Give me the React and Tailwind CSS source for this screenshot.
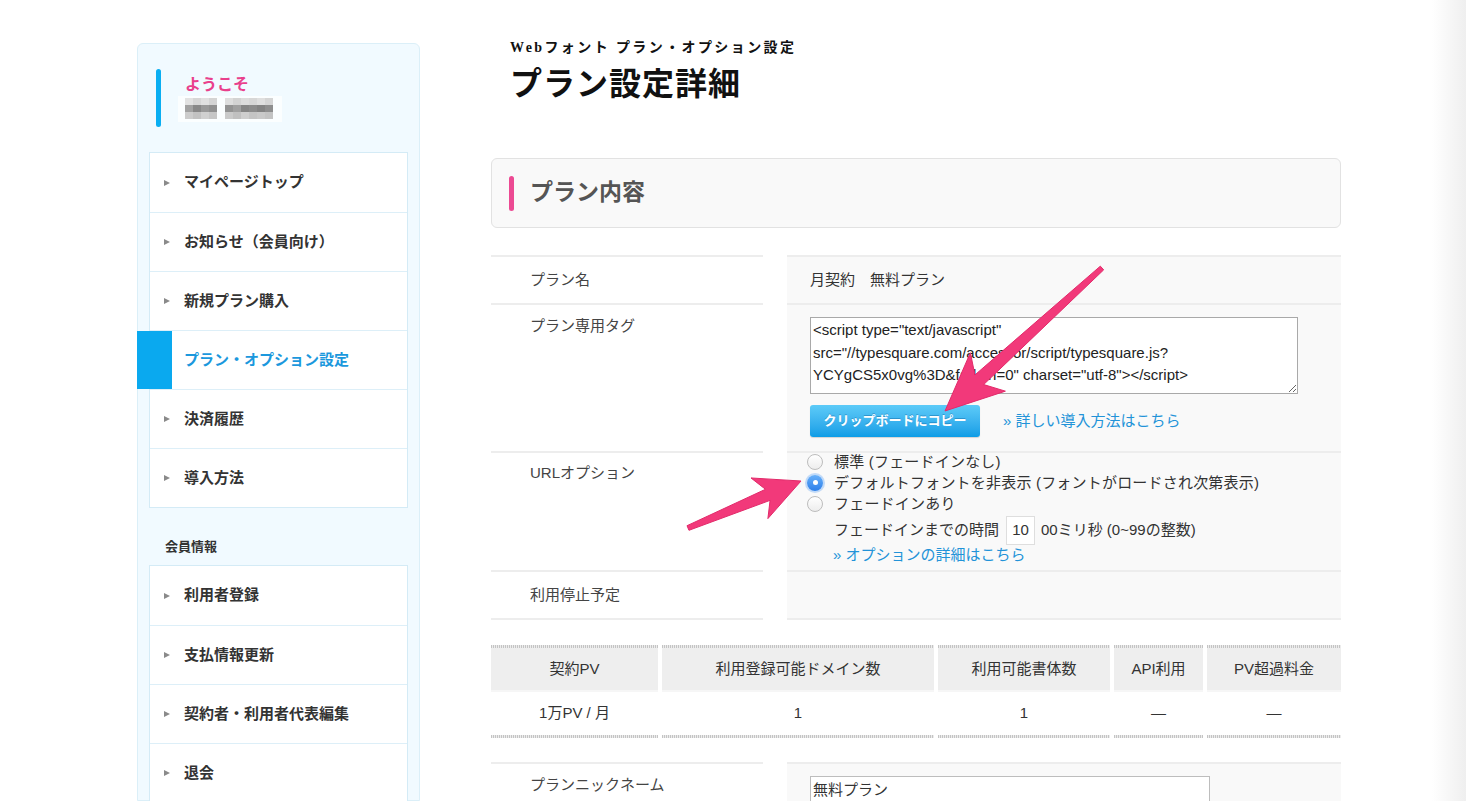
import React from 'react';

const sans = "font-['Liberation_Sans','Noto_Sans_CJK_JP',sans-serif]";
const serif = "font-['Liberation_Serif','Noto_Sans_CJK_JP',serif]";

const menuMain = [
    { label: 'マイページトップ' },
    { label: 'お知らせ（会員向け）' },
    { label: '新規プラン購入' },
    { label: 'プラン・オプション設定', active: true },
    { label: '決済履歴' },
    { label: '導入方法' },
];

const menuMember = [
    { label: '利用者登録' },
    { label: '支払情報更新' },
    { label: '契約者・利用者代表編集' },
    { label: '退会' },
];

// pixelated (blurred) user name
const blurRows = [
    ['bg-[#e2e2e2]', 'bg-[#d6d6d6]', 'bg-[#e0e0e0]', 'bg-[#d4d4d4]', null, 'bg-[#dedede]', 'bg-[#d3d3d3]', 'bg-[#dcdcdc]', 'bg-[#d7d7d7]', 'bg-[#dfdfdf]', 'bg-[#d5d5d5]'],
    ['bg-[#a2a2a2]', 'bg-[#888888]', 'bg-[#999999]', 'bg-[#909090]', null, 'bg-[#939393]', 'bg-[#a0a0a0]', 'bg-[#858585]', 'bg-[#8c8c8c]', 'bg-[#838383]', 'bg-[#8e8e8e]'],
    ['bg-[#cccccc]', 'bg-[#c2c2c2]', 'bg-[#d0d0d0]', 'bg-[#c6c6c6]', null, 'bg-[#cacaca]', 'bg-[#c0c0c0]', 'bg-[#cecece]', 'bg-[#c4c4c4]', 'bg-[#c9c9c9]', 'bg-[#c3c3c3]'],
];

function Triangle() {
    return <span className="block w-0 h-0 border-y-[3.5px] border-y-transparent border-l-[6px] border-l-[#8a8a8a]" />;
}

function Menu({ items }) {
    return (
        <div className="border border-[#d4ebf6] bg-white">
            {items.map((item, i) => (
                <div
                    key={i}
                    className={`flex items-center h-[59px] ${i > 0 ? 'border-t border-[#ddeff8]' : ''}`}
                >
                    {item.active ? (
                        <div className="-ml-[13px] w-[35px] self-stretch bg-[#0aa9ef]" />
                    ) : (
                        <div className="pl-[14px] w-[22px]"><Triangle /></div>
                    )}
                    <span
                        className={`ml-[12px] text-[15px] font-bold ${item.active ? 'text-[#1b98dd]' : 'text-[#333]'}`}
                    >
                        {item.label}
                    </span>
                </div>
            ))}
        </div>
    );
}

function Sidebar() {
    return (
        <aside className="mt-[5px] w-[283px] shrink-0 rounded-t-[6px] border border-[#dbeff8] bg-[#f1faff] px-[11px] pt-[25px] pb-[40px]">
            <div className="flex pl-[7px]">
                <div className="w-[5px] h-[58px] rounded-full bg-[#0aaef2]" />
                <div className="ml-[17px] pt-[6px]">
                    <p className="pl-[7px] text-[16px] leading-[20px] font-bold text-[#e9408c]">ようこそ</p>
                    <div className="mt-[1px] w-[104px] h-[26px] bg-white/70 pl-[7px] pt-[2px] blur-[0.6px]">
                        {blurRows.map((row, r) => (
                            <div key={r} className="flex h-[7px]">
                                {row.map((c, k) => (
                                    <div key={k} className={`w-[8px] h-full ${c || 'bg-transparent w-[6px]'}`} />
                                ))}
                            </div>
                        ))}
                    </div>
                </div>
            </div>

            <div className="mt-[25px]">
                <Menu items={menuMain} />
            </div>

            <p className="mt-[30px] pl-[16px] text-[13px] leading-[18px] font-bold text-[#333]">会員情報</p>

            <div className="mt-[9px]">
                <Menu items={menuMember} />
            </div>
        </aside>
    );
}

function Radio({ checked }) {
    if (checked) {
        return (
            <span className="flex items-center justify-center w-[16px] h-[16px] rounded-full bg-linear-to-b from-[#67b0fa] to-[#2d7fe9] shadow-[0_0_0_2px_rgba(90,160,245,0.35)]">
                <span className="w-[5px] h-[5px] rounded-full bg-white" />
            </span>
        );
    }
    return <span className="block w-[16px] h-[16px] rounded-full border border-[#bdbdbd] bg-linear-to-b from-white to-[#ededed]" />;
}

function Row({ label, children, labelClass = 'items-center', valueClass = 'flex items-center', height, last }) {
    return (
        <div className={`grid grid-cols-[272px_554px] gap-x-[24px] ${height}`}>
            <div className={`flex ${labelClass} border-t-2 border-[#ededed] pl-[39px] text-[15px] text-[#444] ${last ? 'border-b-2' : ''}`}>
                {label}
            </div>
            <div className={`${valueClass} border-t-2 border-[#ededed] bg-[#f9f9f9] pl-[23px] text-[15px] text-[#333] ${last ? 'border-b-2' : ''}`}>
                {children}
            </div>
        </div>
    );
}

const tag = '<script type="text/javascript"\nsrc="//typesquare.com/accessor/script/typesquare.js?\nYCYgCS5x0vg%3D&fadein=0" charset="utf-8"></script>';

const dots = 'h-[3px] bg-[repeating-linear-gradient(90deg,#c4c4c4_0_1px,#ececec_1px_2px)]';

const specHead = ['契約PV', '利用登録可能ドメイン数', '利用可能書体数', 'API利用', 'PV超過料金'];
const specBody = ['1万PV / 月', '1', '1', '—', '—'];

function SpecTable() {
    return (
        <div className="mt-[25px] grid grid-cols-[167px_272px_172px_89px_134px] gap-x-[4px] text-[15px] text-[#333]">
            {specHead.map((h) => (
                <div key={h}>
                    <div className={dots} />
                    <div className="h-[42px] flex items-center justify-center bg-[#eeeeee]">{h}</div>
                </div>
            ))}
            {specBody.map((v, i) => (
                <div key={i}>
                    <div className="h-[2px] bg-[#f6f6f6]" />
                    <div className="h-[43px] flex items-center justify-center bg-white">{v}</div>
                    <div className={dots} />
                </div>
            ))}
        </div>
    );
}

function arrowPoints(tx, ty, px, py, L, W, tailW, neckW) {
    const len = Math.hypot(px - tx, py - ty);
    const ux = (px - tx) / len;
    const uy = (py - ty) / len;
    const nx = -uy;
    const ny = ux;
    const wx = px - ux * L;
    const wy = py - uy * L;
    const kx = px - ux * L * 0.8;
    const ky = py - uy * L * 0.8;
    const pts = [
        [tx + nx * tailW, ty + ny * tailW],
        [kx + nx * neckW, ky + ny * neckW],
        [wx + nx * W, wy + ny * W],
        [px, py],
        [wx - nx * W, wy - ny * W],
        [kx - nx * neckW, ky - ny * neckW],
        [tx - nx * tailW, ty - ny * tailW],
    ];
    return pts.map((p) => p.join(',')).join(' ');
}

function Arrows() {
    return (
        <svg className="absolute top-0 left-0 pointer-events-none" width="1466" height="801">
            <g fill="#f2397a" stroke="#e22a6a" strokeWidth="1" strokeLinejoin="round">
                <polygon points={arrowPoints(1102, 268, 945, 411, 58, 26, 2.5, 6.5)} />
                <polygon points={arrowPoints(688, 528, 801, 481, 45, 22, 2.5, 6)} />
            </g>
        </svg>
    );
}

export default function App() {
    return (
        <div className={`relative flex h-screen overflow-hidden bg-white ${sans}`}>
            <div className="flex-1 flex pl-[137px] pt-[38px]">
                <Sidebar />

                <main className="ml-[71px] w-[850px] shrink-0">
                    <p className={`pl-[19px] text-[14px] leading-[20px] font-bold tracking-[2.4px] text-[#111] ${serif}`}>
                        Webフォント プラン・オプション設定
                    </p>
                    <h1 className={`mt-[6px] pl-[19px] text-[32px] leading-[40px] font-bold tracking-[1px] text-[#111] ${serif}`}>
                        プラン設定詳細
                    </h1>

                    <div className="mt-[54px] h-[70px] flex items-center rounded-[6px] border border-[#e2e2e2] bg-[#f9f9f9] pl-[17px]">
                        <div className="w-[5px] h-[35px] rounded-full bg-[#ec4a93]" />
                        <h2 className={`ml-[16px] text-[23px] font-bold text-[#555] ${serif}`}>プラン内容</h2>
                    </div>

                    <div className="mt-[27px]">
                        <Row label="プラン名" height="h-[48px]">月契約　無料プラン</Row>

                        <Row label="プラン専用タグ" height="h-[148px]" labelClass="items-start pt-[10px]" valueClass="pt-[12px]">
                            <textarea
                                readOnly
                                defaultValue={tag}
                                className="block w-[488px] h-[77px] border border-[#a9a9a9] bg-white px-[2px] py-[1px] text-[15px] leading-[22.5px] text-[#222] outline-none"
                            />
                            <div className="mt-[11px] flex items-center gap-[23px]">
                                <button className="w-[170px] h-[32px] rounded-[3px] bg-linear-to-b from-[#5ccbf8] to-[#0b9de6] text-[13px] font-bold text-white [text-shadow:0_-1px_0_rgba(0,80,140,0.35)] shadow-[0_1px_1px_rgba(0,0,0,0.15)]">
                                    クリップボードにコピー
                                </button>
                                <a className="text-[15px] text-[#2293d8]">» 詳しい導入方法はこちら</a>
                            </div>
                        </Row>

                        <Row label="URLオプション" height="h-[119px]" labelClass="items-start pt-[9px]" valueClass="">
                            <div className="-mt-[2px] -ml-[3px]">
                                {[
                                    ['標準 (フェードインなし)', false],
                                    ['デフォルトフォントを非表示 (フォントがロードされ次第表示)', true],
                                    ['フェードインあり', false],
                                ].map(([t, c]) => (
                                    <div key={t} className="flex items-center h-[21px]">
                                        <Radio checked={c} />
                                        <span className="ml-[11px] leading-[21px] tracking-[0.2px]">{t}</span>
                                    </div>
                                ))}
                            </div>
                            <div className="mt-[2px] pl-[24px] flex items-center h-[29px]">
                                <span>フェードインまでの時間</span>
                                <span className="ml-[7px] w-[29px] h-[29px] flex items-center justify-center border border-[#dedede] bg-white">10</span>
                                <span className="ml-[6px]">00ミリ秒 (0~99の整数)</span>
                            </div>
                            <a className="block pl-[23px] leading-[20px] text-[#2293d8]">» オプションの詳細はこちら</a>
                        </Row>

                        <Row label="利用停止予定" height="h-[50px]" last />
                    </div>

                    <SpecTable />

                    <div className="mt-[24px]">
                        <Row label="プランニックネーム" height="h-[60px]" labelClass="items-start pt-[10px]" valueClass="pt-[12px]">
                            <div className="w-[400px] h-[32px] border border-[#bdbdbd] bg-white px-[2px] leading-[26px]">無料プラン</div>
                        </Row>
                    </div>
                </main>
            </div>

            <div className="w-[34px] shrink-0 bg-linear-to-r from-white to-[#efefef]" />

            <Arrows />
        </div>
    );
}
